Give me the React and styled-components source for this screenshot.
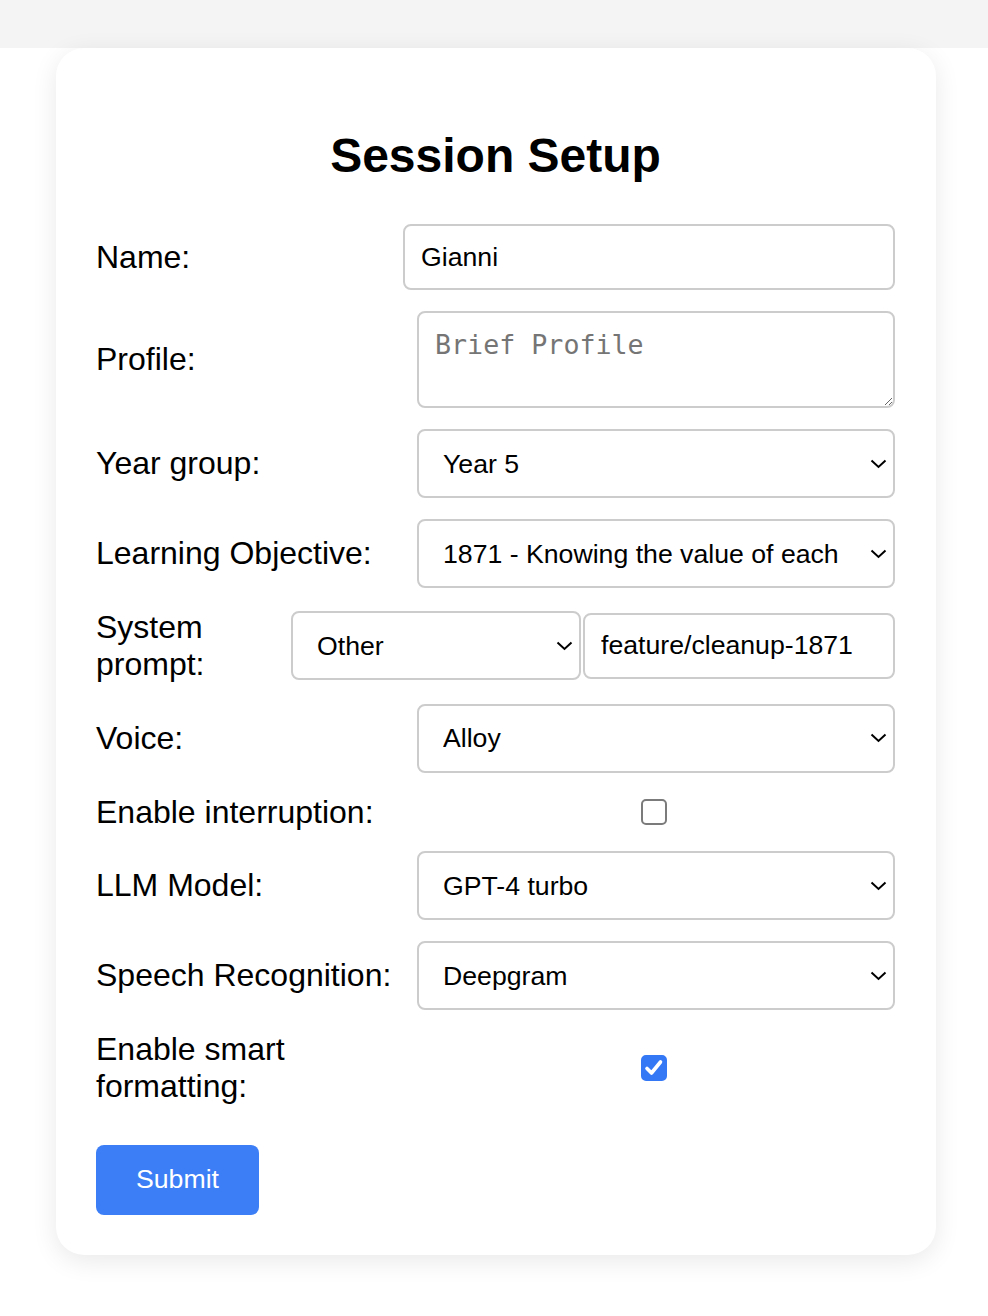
import styled, { createGlobalStyle } from "styled-components";

const GlobalStyle = createGlobalStyle`
  body {
    margin: 0;
    background: #ffffff;
    font-family: "Liberation Sans", Arial, sans-serif;
    color: #000000;
  }
`;

const Pagina = styled.div`
  min-height: 1316px;
  background: #ffffff;
`;

const Faixa = styled.div`
  height: 48px;
  background: #f4f4f4;
`;

const Cartao = styled.form`
  box-sizing: border-box;
  width: 880px;
  margin-left: 56px;
  padding: 40px 41px 40px 40px;
  background: #ffffff;
  border-radius: 28px;
  box-shadow: 0 6px 26px rgba(0, 0, 0, 0.09);
`;

const Titulo = styled.h2`
  margin: 40px 0 41px;
  font-size: 48px;
  font-weight: 700;
  text-align: center;
  line-height: 55px;
`;

const Campos = styled.div`
  display: flex;
  flex-direction: column;
  gap: 21px;
`;

const Linha = styled.div`
  display: flex;
  align-items: center;
`;

const Rotulo = styled.label`
  flex: 1 1 0;
  min-width: 0;
  font-size: 32px;
  line-height: 36.8px;
`;

const Entrada = styled.input`
  box-sizing: border-box;
  flex: none;
  width: ${(p) => p.$largura}px;
  height: 66px;
  margin: 0;
  padding: 0 16px;
  border: 2px solid #cccccc;
  border-radius: 8px;
  font-family: "Liberation Sans", Arial, sans-serif;
  font-size: 26.67px;
  color: #000000;
  outline: none;
`;

const AreaTexto = styled.textarea`
  box-sizing: border-box;
  flex: none;
  width: 478px;
  height: 97px;
  margin: 0;
  padding: 16px;
  border: 2px solid #cccccc;
  border-radius: 8px;
  font-family: "DejaVu Sans Mono", monospace;
  font-size: 26.67px;
  outline: none;

  &::placeholder {
    color: #757575;
  }
`;

const CaixaSelecao = styled.div`
  position: relative;
  flex: none;
  width: ${(p) => p.$largura}px;
`;

const Selecao = styled.select`
  box-sizing: border-box;
  display: block;
  width: 100%;
  height: 69px;
  margin: 0;
  padding: 0 36px 0 24px;
  border: 2px solid #cccccc;
  border-radius: 8px;
  background: #ffffff;
  appearance: none;
  font-family: "Liberation Sans", Arial, sans-serif;
  font-size: 26.67px;
  color: #000000;
  outline: none;
`;

const Seta = styled.svg`
  position: absolute;
  right: 8px;
  top: 50%;
  transform: translateY(-50%);
  pointer-events: none;
`;

const GrupoPrompt = styled.div`
  display: flex;
  align-items: center;
  gap: 2px;
  flex: none;
  width: 604px;
`;

const CelulaMarcador = styled.div`
  box-sizing: border-box;
  flex: none;
  width: 478px;
  padding-right: 4px;
  display: flex;
  justify-content: center;
`;

const Marcador = styled.span`
  position: relative;
  box-sizing: border-box;
  width: 26px;
  height: 26px;
  border: 2px solid ${(p) => (p.$marcado ? "#3478f6" : "#7b7b7b")};
  border-radius: 5px;
  background: ${(p) => (p.$marcado ? "#3478f6" : "#ffffff")};
`;

const Visto = styled.svg`
  position: absolute;
  left: -2px;
  top: -2px;
`;

const Botao = styled.button`
  align-self: flex-start;
  height: 70px;
  margin-top: 19px;
  padding: 0 40px;
  border: none;
  border-radius: 8px;
  background: #3b7ef6;
  color: #ffffff;
  font-family: "Liberation Sans", Arial, sans-serif;
  font-size: 26.67px;
  cursor: pointer;
`;

const CampoSelecao = ({ largura = 478, valor, opcoes }) => (
  <CaixaSelecao $largura={largura}>
    <Selecao defaultValue={valor}>
      {opcoes.map((o) => (
        <option key={o}>{o}</option>
      ))}
    </Selecao>
    <Seta width="17" height="10" viewBox="0 0 17 10">
      <polyline points="1.5,1.5 8.5,8 15.5,1.5" fill="none" stroke="#000" strokeWidth="2" />
    </Seta>
  </CaixaSelecao>
);

const Caixa = ({ marcado }) => (
  <CelulaMarcador>
    <Marcador $marcado={marcado} role="checkbox" aria-checked={marcado}>
      {marcado && (
        <Visto width="26" height="26" viewBox="0 0 26 26">
          <path
            d="M6 13.5 L10.5 18 L19.5 7"
            fill="none"
            stroke="#fff"
            strokeWidth="3.6"
            strokeLinecap="round"
            strokeLinejoin="round"
          />
        </Visto>
      )}
    </Marcador>
  </CelulaMarcador>
);

const App = () => {
  return (
    <Pagina>
      <GlobalStyle />
      <Faixa />
      <Cartao onSubmit={(e) => e.preventDefault()}>
        <Titulo>Session Setup</Titulo>
        <Campos>
          <Linha>
            <Rotulo>Name:</Rotulo>
            <Entrada $largura={492} defaultValue="Gianni" />
          </Linha>
          <Linha>
            <Rotulo>Profile:</Rotulo>
            <AreaTexto placeholder="Brief Profile" />
          </Linha>
          <Linha>
            <Rotulo>Year group:</Rotulo>
            <CampoSelecao valor="Year 5" opcoes={["Year 4", "Year 5", "Year 6"]} />
          </Linha>
          <Linha>
            <Rotulo>Learning Objective:</Rotulo>
            <CampoSelecao
              valor="1871 - Knowing the value of each"
              opcoes={["1871 - Knowing the value of each"]}
            />
          </Linha>
          <Linha>
            <Rotulo>System prompt:</Rotulo>
            <GrupoPrompt>
              <CampoSelecao largura={290} valor="Other" opcoes={["Default", "Other"]} />
              <Entrada $largura={312} defaultValue="feature/cleanup-1871" />
            </GrupoPrompt>
          </Linha>
          <Linha>
            <Rotulo>Voice:</Rotulo>
            <CampoSelecao valor="Alloy" opcoes={["Alloy", "Echo", "Nova"]} />
          </Linha>
          <Linha>
            <Rotulo>Enable interruption:</Rotulo>
            <Caixa marcado={false} />
          </Linha>
          <Linha>
            <Rotulo>LLM Model:</Rotulo>
            <CampoSelecao valor="GPT-4 turbo" opcoes={["GPT-4 turbo", "GPT-4o"]} />
          </Linha>
          <Linha>
            <Rotulo>Speech Recognition:</Rotulo>
            <CampoSelecao valor="Deepgram" opcoes={["Deepgram", "Whisper"]} />
          </Linha>
          <Linha>
            <Rotulo>Enable smart formatting:</Rotulo>
            <Caixa marcado />
          </Linha>
          <Botao type="submit">Submit</Botao>
        </Campos>
      </Cartao>
    </Pagina>
  );
};

export default App;
